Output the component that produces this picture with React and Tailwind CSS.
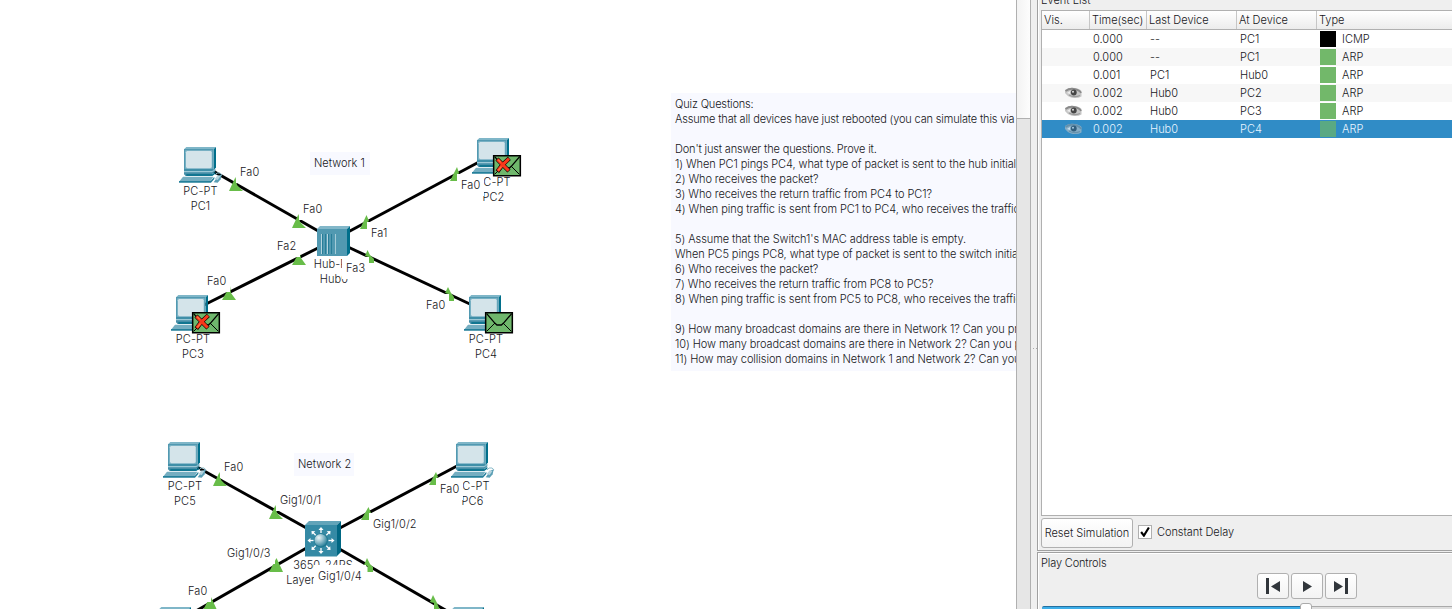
const T = "font-['Inter',sans-serif] font-[350] text-[11px] leading-[15px] text-[#16161a] whitespace-pre";

const pcs = [
  { x: 179, y: 147 }, { x: 472, y: 138 }, { x: 171, y: 295 }, { x: 464, y: 295 },
  { x: 163, y: 442 }, { x: 451, y: 442 }, { x: 154, y: 607 }, { x: 447, y: 607 },
];
const links = [
  [213, 171, 320, 232], [479, 162, 348, 232], [204, 305, 320, 247], [348, 247, 472, 305],
  [197, 467, 310, 530], [457, 466, 338, 529], [196, 611, 310, 546], [336, 547, 447, 611],
];
const arrows = [
  "235.500,177 237,185 243,191 229,191", "298.500,214 300,222 306,228 292,228",
  "457,167 459,173 457.500,175 457.500,181 450,181", "366.500,215 369,221 367.500,222 367.500,229 360,229",
  "230,286 231,293 236,300 222,300", "299.500,252 301,258 306,265 292,265",
  "367.500,250 370,255 374,259 374,263 368.500,263 368.500,257 365,256", "448,287 451,293 454,297 454,301 448.500,301 448.500,294 445,293",
  "219.500,472 221,480 227,486 213,486", "275.500,505 277,513 283,519 269,519",
  "436,472 438,477 436,479 436,485 429,485", "368.500,507 371,513 369,514 369,520 361,520",
  "276.500,558 283,572 269,572", "210.500,596 217,610 203,610",
  "367,558 370,564 373,567 373,572 367.500,572 367.500,566 364,565", "433,595 437,603 440,610 434,610 434,603 430,602",
];
const names = [
  { t: "PC-PT\nPC1", x: 200.500, y: 184 }, { t: "PC-PT\nPC2", x: 493.500, y: 175 },
  { t: "PC-PT\nPC3", x: 193, y: 332 }, { t: "PC-PT\nPC4", x: 486, y: 332 },
  { t: "PC-PT\nPC5", x: 185, y: 479 }, { t: "PC-PT\nPC6", x: 472.500, y: 479 },
  { t: "Hub-PT\nHub0", x: 334, y: 257 }, { t: "3650-24PS\nLayer3 Switch", x: 323, y: 558 },
];
const ports = [
  { t: "Fa0", x: 240, y: 165 }, { t: "Fa0", x: 303, y: 202 }, { t: "Fa0", x: 461, y: 178 },
  { t: "Fa1", x: 371, y: 226 }, { t: "Fa2", x: 277, y: 239 }, { t: "Fa0", x: 207, y: 274 },
  { t: "Fa3", x: 346, y: 261 }, { t: "Fa0", x: 426, y: 298 }, { t: "Fa0", x: 224, y: 460 },
  { t: "Gig1/0/1", x: 280, y: 493 }, { t: "Fa0", x: 440, y: 482 }, { t: "Gig1/0/2", x: 373, y: 517 },
  { t: "Gig1/0/3", x: 227, y: 546 }, { t: "Gig1/0/4", x: 318, y: 569 }, { t: "Fa0", x: 188, y: 584 },
];
const quiz = [
  "Quiz Questions:",
  "Assume that all devices have just rebooted (you can simulate this via",
  "",
  "Don't just answer the questions. Prove it.",
  "1) When PC1 pings PC4, what type of packet is sent to the hub initially?",
  "2) Who receives the packet?",
  "3) Who receives the return traffic from PC4 to PC1?",
  "4) When ping traffic is sent from PC1 to PC4, who receives the traffic?",
  "",
  "5) Assume that the Switch1's MAC address table is empty.",
  "When PC5 pings PC8, what type of packet is sent to the switch initially?",
  "6) Who receives the packet?",
  "7) Who receives the return traffic from PC8 to PC5?",
  "8) When ping traffic is sent from PC5 to PC8, who receives the traffic?",
  "",
  "9) How many broadcast domains are there in Network 1? Can you prove it?",
  "10) How many broadcast domains are there in Network 2? Can you prove it?",
  "11) How may collision domains in Network 1 and Network 2? Can you prove it?",
];
const rows = [
  ["0.000", "--", "PC1", "ICMP"], ["0.000", "--", "PC1", "ARP"], ["0.001", "PC1", "Hub0", "ARP"],
  ["0.002", "Hub0", "PC2", "ARP", true], ["0.002", "Hub0", "PC3", "ARP", true], ["0.002", "Hub0", "PC4", "ARP", true],
];

function Pc({ x, y }) {
  return (
    <g transform={`translate(${x} ${y}) scale(.3333)`}>
      <path d="M108 84q5-9 15-6q9 4 2 10" fill="none" stroke="#8dbccb" strokeWidth="3" />
      <path d="M118 86l10-4-3 15-9 10-12-1z" fill="#5b9fb5" />
      <path d="M107 96l9-11 8 3-8 11z" fill="#b5d3de" />
      <path d="M15 7l7-7h89l-7 7z" fill="#7fb6c8" />
      <path d="M104 7l7-7v62l-7 6z" fill="#006f8b" />
      <path d="M15 6h89v61H15z" fill="#5299b1" />
      <path d="M19 10h81v55H19z" fill="#8abccc" />
      <path d="M24 12h71l3 4v44l-4 4H25l-4-4V16z" fill="#d4e4ea" />
      <path d="M15 66h89v7H15z" fill="#3f8fa8" />
      <path d="M15 72h80l14-6v7l-9 8v6H20l-5-5z" fill="#458ea7" />
      <path d="M15 72h84l8-4v3l-8 5H15z" fill="#9cc8d6" />
      <path d="M22 82h78l9-8v6l-8 6H22z" fill="#006f8b" />
      <path d="M12 89h91l-8 13H2z" fill="#75aec1" />
      <path d="M0 102h95l11-13v7l-10 11H0z" fill="#24809b" />
    </g>
  );
}

function Mail({ x, y, fail }) {
  return (
    <g transform={`translate(${x} ${y}) scale(.3333)`}>
      <path d="M2 2h80v60H2z" fill="#6fb76c" stroke="#000" strokeWidth="4.500" />
      <path d="M5 58L30 33M79 58L54 33" stroke="#000" strokeWidth="3" />
      <path d="M5 5L30 34l6 5h13l6-5L80 5" fill="none" stroke="#000" strokeWidth="4" />
      {fail && (
        <g fill="none">
          <path d="M12 12L48 48M49 10L28 30 13 50" stroke="#000" strokeWidth="13" />
          <path d="M13 13L47 47M48 11L28 30 14 48" stroke="#f9371a" strokeWidth="9.500" />
          <path d="M16 14l7 8M25 35l-9 11" stroke="#ff7540" strokeWidth="4" />
        </g>
      )}
    </g>
  );
}

function Eye({ sel }) {
  return (
    <svg className="h-3 w-[17px]" viewBox="0 0 17 12">
      <path d="M0 3Q4 0 10 1Q15 2 16.500 4V9.500Q12 12 6 10.500Q2 9 0 6z" fill={sel ? "#86adc6" : "#c6c6c6"} />
      <path d="M.5 4Q5 .8 10 2.200T16 6" fill="none" stroke={sel ? "#6591ac" : "#8a8a8a"} strokeWidth="1.800" />
      <path d="M4 8Q9 11 15 8.500" fill="none" stroke={sel ? "#6591ac" : "#999"} strokeWidth="1.200" />
      <path d="M2 6l3-2v3z" fill={sel ? "#c7dfed" : "#eee"} />
      <circle cx="8.800" cy="5.500" r="2.900" fill={sel ? "#315e7c" : "#454545"} />
      <circle cx="8" cy="4.700" r="1" fill={sel ? "#a9cce2" : "#ddd"} />
    </svg>
  );
}

function Drawing() {
  return (
    <svg className="absolute left-0 top-0" width="660" height="609" viewBox="0 0 660 609">
      {links.map((l, i) => <line key={i} x1={l[0]} y1={l[1]} x2={l[2]} y2={l[3]} stroke="#000" strokeWidth="3" />)}
      {arrows.map((a, i) => <polygon key={i} points={a} fill="#68bd49" />)}
      {pcs.map((p, i) => <Pc key={i} {...p} />)}
      <g transform="translate(317 226)">
        <path d="M0 3L3 0H33L30 3z" fill="#82b7c9" />
        <path d="M30 3L33 0V27L30 30z" fill="#006f8b" />
        <path d="M0 3H30V30H0z" fill="#5199b1" />
        <path d="M4.500 8V28M10.500 8V28" stroke="#b4d4df" strokeWidth="1" />
        <path d="M5.500 8V28M8.500 8V28M11.500 8V28M14.500 8V28" stroke="#287e99" strokeWidth="1" />
        <path d="M18.500 8V28" stroke="#a4cbd7" strokeWidth="1" />
      </g>
      <g transform="translate(305 521)">
        <path d="M0 4L4 0H36L32 4z" fill="#62a4b9" />
        <path d="M32 4L36 0V31L32 35z" fill="#006783" />
        <path d="M0 4H32V35.500H0z" fill="#358aa5" />
        {[0, 45, 90, 135, 180, 225, 270, 315].map((r) => (
          <g key={r} transform={`rotate(${r} 16 19.500)`}>
            <path d="M16 12V8" stroke="#fff" strokeWidth="1.300" />
            <path d="M13.500 9L16 6L18.500 9z" fill="#fff" />
          </g>
        ))}
        <circle cx="16" cy="19.500" r="7" fill="#207991" />
        <circle cx="15.700" cy="19.200" r="6.200" fill="url(#ball)" />
      </g>
      <defs>
        <radialGradient id="ball" cx=".35" cy=".3" r=".75">
          <stop offset="0" stopColor="#eef6f8" /><stop offset=".5" stopColor="#8dbdcb" /><stop offset="1" stopColor="#297f99" />
        </radialGradient>
      </defs>
    </svg>
  );
}

function Workspace() {
  return (
    <main className="relative h-full w-[1016px] shrink-0 overflow-hidden bg-white">
      <Drawing />
      {names.map((n, i) => (
        <div key={i} className={T + " absolute -translate-x-1/2 text-center tracking-[0.1px]"} style={{ left: n.x, top: n.y }}>{n.t}</div>
      ))}
      {ports.map((n, i) => (
        <div key={i} className={T + " absolute -ml-1 -mt-1 bg-white px-1 pb-[3px] pt-1 tracking-[0.1px]"} style={{ left: n.x, top: n.y }}>{n.t}</div>
      ))}
      <svg className="absolute left-0 top-0" width="660" height="609" viewBox="0 0 660 609">
        <Mail x={493} y={155} fail /><Mail x={192} y={312} fail /><Mail x={485} y={312} />
      </svg>
      <div className={T + " absolute left-[310px] top-[152px] h-[23px] w-[60px] bg-[#f8f9ff] pl-1 pt-1"}>Network 1</div>
      <div className={T + " absolute left-[294px] top-[453px] h-[23px] w-[60px] bg-[#f8f9ff] pl-1 pt-1"}>Network 2</div>
      <div className={T + " absolute left-[671px] top-[93px] h-[278px] w-[400px] bg-[#f8f9ff] pl-1 pt-1"}>
        {quiz.map((q, i) => <div key={i} className={"h-[15px] " + (i < 4 ? "tracking-[-0.16px]" : "tracking-[-0.08px]")}>{q}</div>)}
      </div>
    </main>
  );
}

const cols = "grid grid-cols-[48px_57px_90px_80px_1fr]";
const btn = "flex items-center justify-center rounded-[3px] border border-[#b0b0b0] bg-linear-to-b from-white to-[#f3f3f3]";

export default function App() {
  return (
    <div className="flex h-[609px] w-[1452px] overflow-hidden bg-[#efefef]">
      <Workspace />
      <div className="flex w-[15px] shrink-0 flex-col border-x border-[#b0b0b0] bg-[#e6e6e6]">
        <div className="h-[119px] border-b border-[#b0b0b0] bg-linear-to-r from-[#f3f3f3] to-[#fdfdfd]" />
      </div>
      <div className="flex w-[6px] shrink-0 items-center justify-center">
        <svg width="5" height="90" viewBox="0 0 5 90"><path d="M1 88.500h1M4 88.500h1" stroke="#aaa" /></svg>
      </div>
      <aside className={T + " flex min-w-0 flex-1 flex-col"}>
        <div className="flex h-[551px] flex-col border-b border-l border-[#a0a0a0] pl-[3px] shadow-[inset_1px_0_0_#fff]">
          <div className="-mt-[7px] h-[17px]">Event List</div>
          <div className="h-[506px] border border-r-0 border-[#b0b0b0] bg-white">
            <div className={cols + " h-[19px] border-b border-[#b0b0b0] bg-linear-to-b from-white to-[#ececec] pt-0.5"}>
              {["Vis.", "Time(sec)", "Last Device", "At Device", "Type"].map((h, i) => (
                <div key={h} className={"-mt-0.5 h-[18px] pl-0.5 pt-0.5 " + (i < 4 ? "border-r border-[#c6c6c6]" : "")}>{h}</div>
              ))}
            </div>
            {rows.map((r, i) => (
              <div key={i} className={cols + " h-[18px] items-center " + (i === 5 ? "bg-[#308cc6] text-[#e9f5ff]" : i % 2 ? "bg-[#f7f7f7]" : "bg-white")}>
                <div className="flex justify-end pr-2">{r[4] && <Eye sel={i === 5} />}</div>
                <div className="pl-[3px]">{r[0]}</div>
                <div className="pl-[3px]">{r[1]}</div>
                <div className="pl-[3px]">{r[2]}</div>
                <div className="flex items-center gap-1.5 pl-[3px]">
                  <i className={"h-4 w-4 " + (i === 0 ? "bg-black" : i === 5 ? "bg-[#5aa983]" : "bg-[#72b86a]")} />{r[3]}
                </div>
              </div>
            ))}
          </div>
          <div className="flex pt-[2px]">
            <div className={btn + " h-[30px] w-[92px]"}>Reset Simulation</div>
            <div className="ml-[5px] mt-[7px] flex h-[14px] w-[14px] items-center justify-center border border-[#b0b0b0] bg-white">
              <svg width="10" height="10" viewBox="0 0 9 9"><path d="M1 4.500L3.500 7.800L8 .5" fill="none" stroke="#000" strokeWidth="1.900" /></svg>
            </div>
            <div className="ml-[5px] mt-[6px] pt-px tracking-[-0.05px]">Constant Delay</div>
          </div>
        </div>
        <div className="mt-px flex h-[57px] flex-col border-l border-t border-[#a0a0a0] pl-[3px] pt-[3px] shadow-[inset_1px_1px_0_#fff]">
          <div className="tracking-[-0.15px]">Play Controls</div>
          <div className="ml-[216px] mt-[2px] flex gap-[2px]">
            <div className={btn + " h-[26px] w-8"}><svg width="16" height="16" viewBox="0 0 16 16" fill="#31363b"><path d="M1 0h3v16H1zM15 3v11L6 8.500z" /></svg></div>
            <div className={btn + " h-[26px] w-8"}><svg width="16" height="16" viewBox="0 0 16 16" fill="#31363b"><path d="M4 3l9 5.500L4 14z" /></svg></div>
            <div className={btn + " h-[26px] w-8"}><svg width="16" height="16" viewBox="0 0 16 16" fill="#31363b"><path d="M12 0h3v16h-3zM1 3v11l9-5.500z" /></svg></div>
          </div>
          <div className="relative ml-px mt-[7px] h-3 rounded-tl-[2px] border-t border-[#2470a0] bg-[#3daee9]">
            <div className="absolute -top-px left-[264px] right-0 h-3 border-t border-[#aaa] bg-[#dedede]" />
            <div className="absolute -top-1 left-[258px] h-4 w-3 rounded-[3px] border border-[#aaa] bg-white" />
          </div>
        </div>
      </aside>
    </div>
  );
}
